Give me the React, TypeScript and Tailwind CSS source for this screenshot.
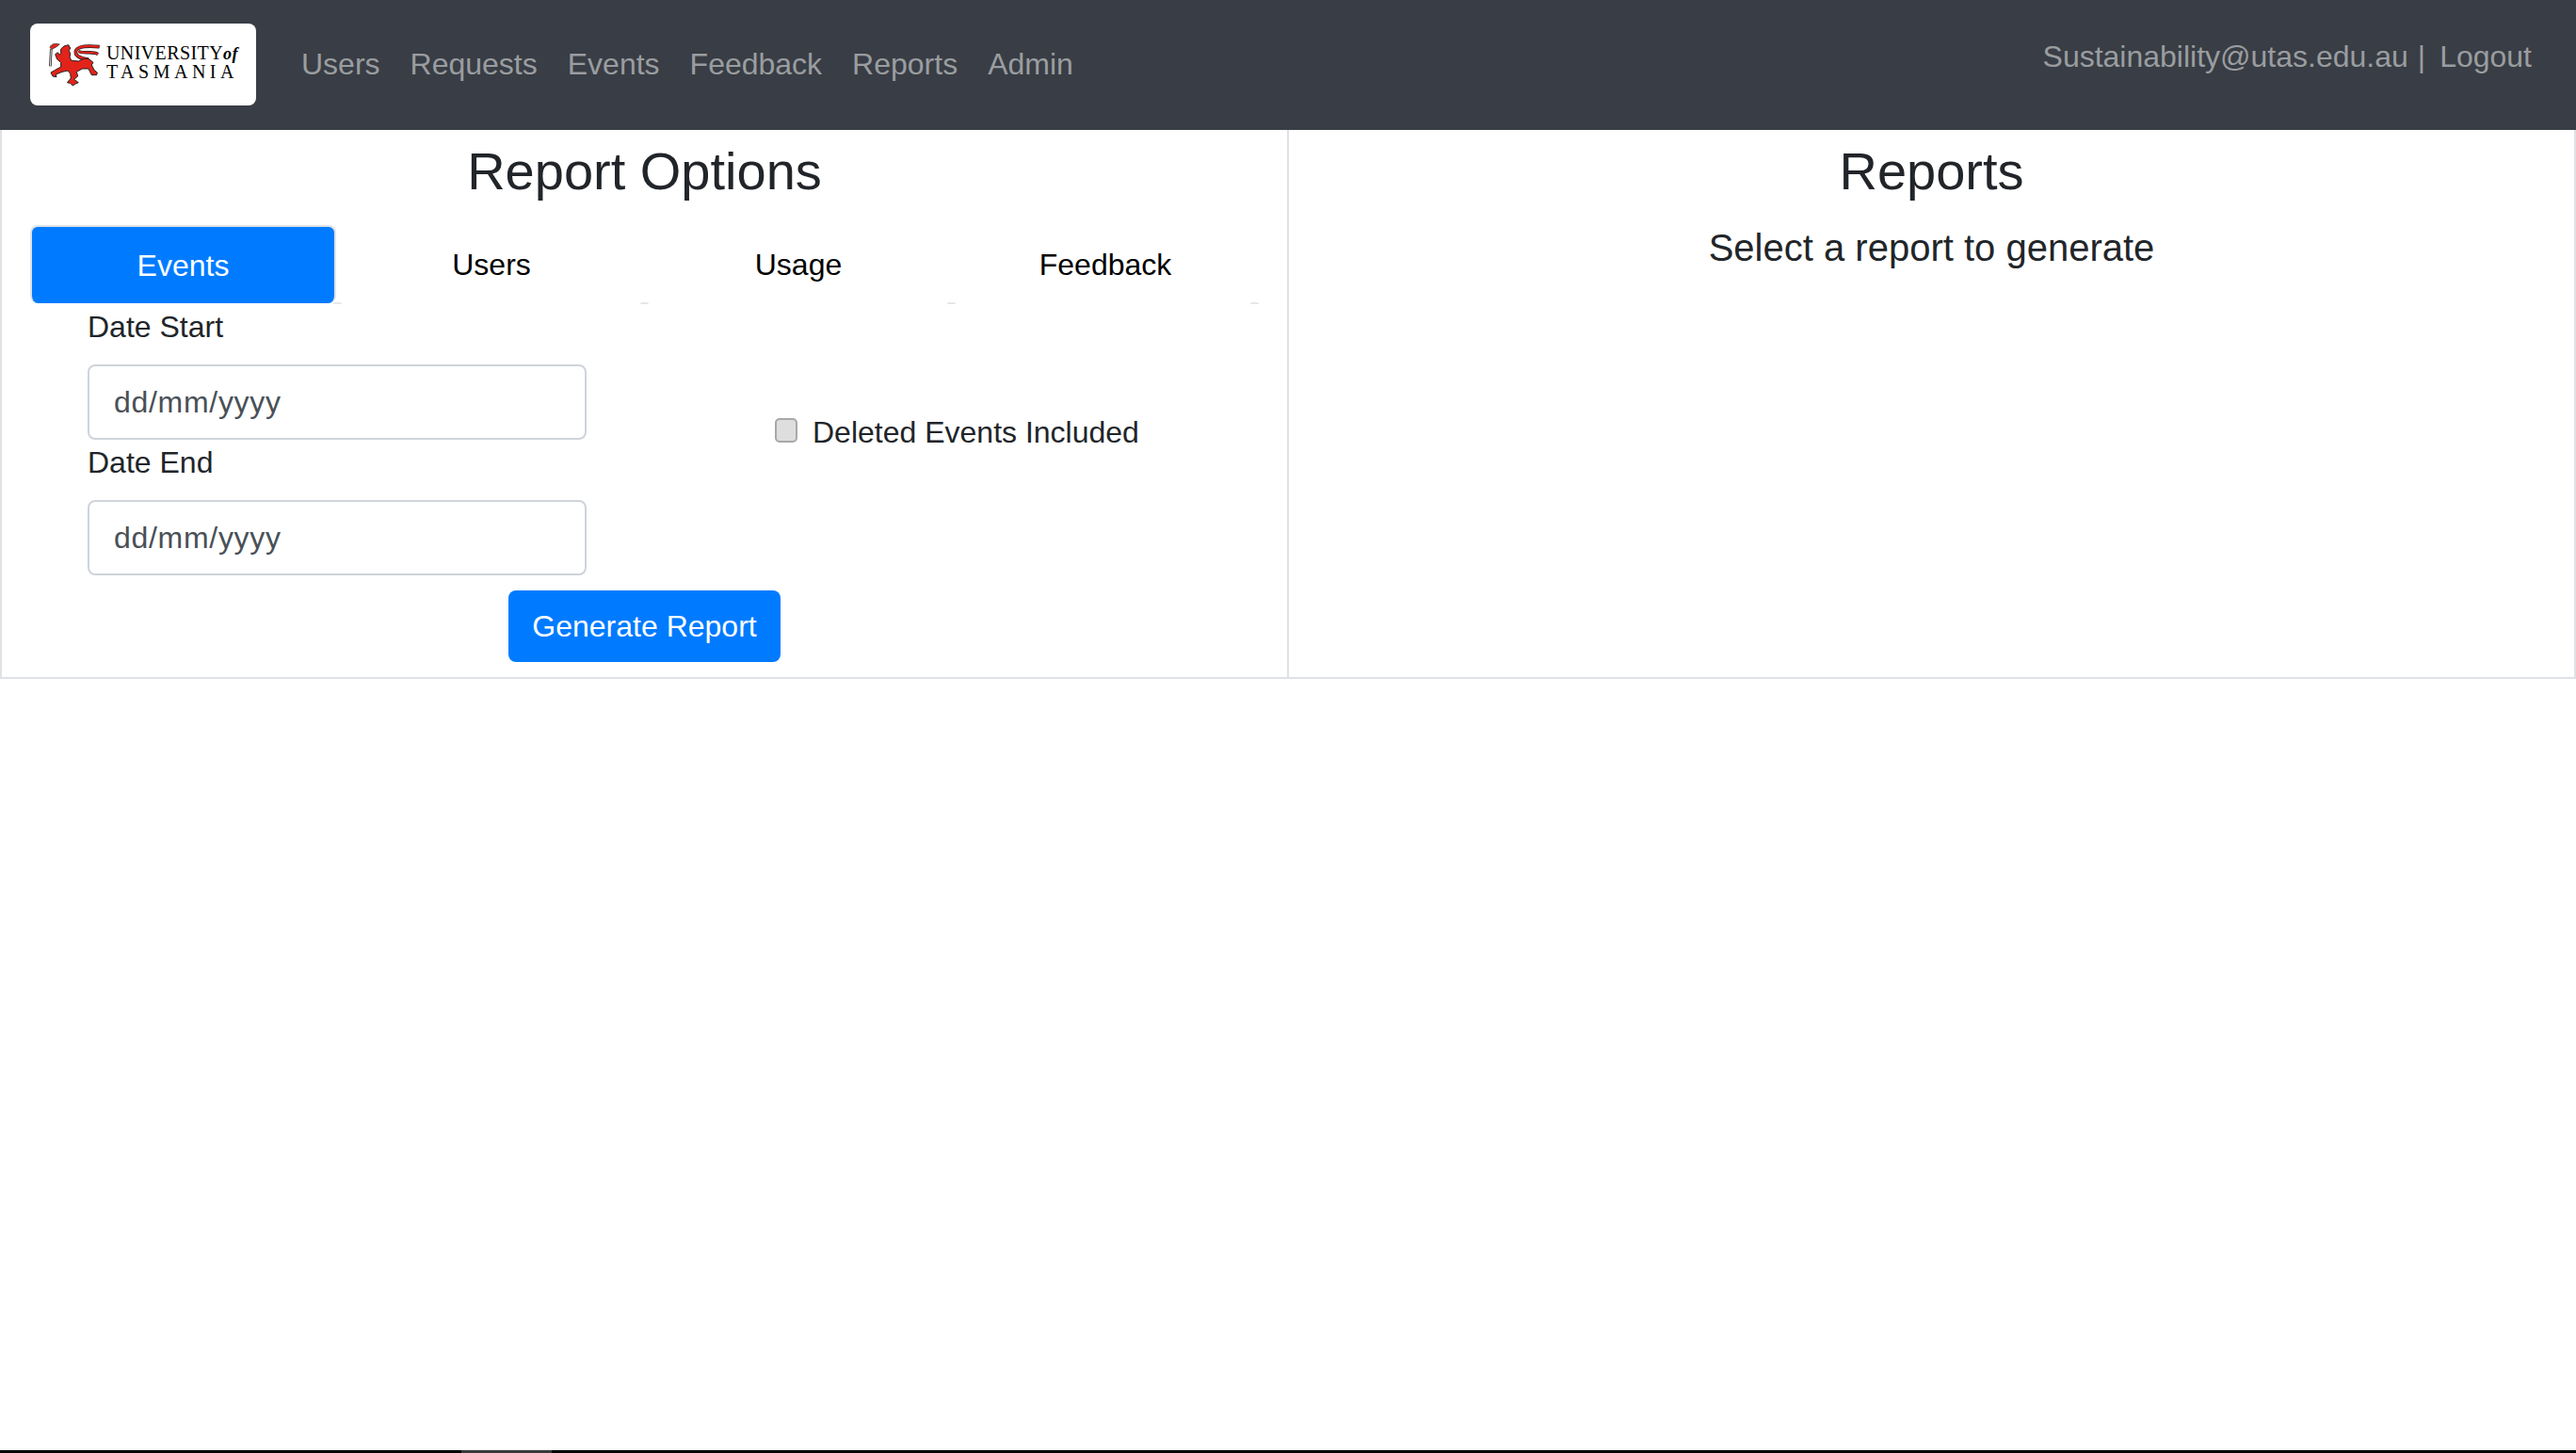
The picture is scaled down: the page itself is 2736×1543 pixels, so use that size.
function Lion() {
  const outline = "#222";
  return (
    <svg viewBox="21 24 168 144" className="w-[56px] h-[48px] shrink-0">
      <path d="M31 45 L28 100" fill="none" stroke="#333" strokeWidth="8" />
      <path d="M31 45 L28 100" fill="none" stroke="#d8d8d8" strokeWidth="3" />
      <path d="M27 40 C30 28 45 26 58 30 C50 38 40 43 32 46 Z" fill="#e2231a" stroke={outline} strokeWidth="2" />
      <path d="M150 78 C125 76 104 66 110 50 C116 36 150 34 185 38" fill="none" stroke={outline} strokeWidth="11" />
      <path d="M118 52 C135 62 165 50 180 62" fill="none" stroke={outline} strokeWidth="10" />
      <path d="M150 78 C125 76 104 66 110 50 C116 36 150 34 185 38" fill="none" stroke="#e2231a" strokeWidth="7" />
      <path d="M118 52 C135 62 165 50 180 62" fill="none" stroke="#e2231a" strokeWidth="6" />
      <path
        d="M62 45 L72 36 L86 32 L92 42 L88 50 L92 60 L90 72 L96 82 L118 84 L134 76 L150 76 L165 88 L160 96 L168 112 L178 120 L176 128 L160 128 L150 108 L130 108 L112 118 L116 132 L104 142 L118 152 L108 156 L100 162 L92 154 L82 152 L94 138 L92 124 L84 114 L66 118 L46 126 L48 134 L36 132 L30 120 L44 112 L62 102 L62 88 L50 78 L44 62 L52 56 L58 64 L62 58 Z"
        fill="#e2231a"
        stroke={outline}
        strokeWidth="3"
      />
    </svg>
  );
}

function Mark({ className }: { className: string }) {
  return <span className={`absolute bottom-[-1px] h-[2px] w-[9px] bg-[#e4e7ea] rounded-t-full ${className}`}></span>;
}

export default function App() {
  const tabBase = "relative h-[83px] flex items-center justify-center text-[32px] rounded-[8px]";
  return (
    <div className="w-full h-[1543px] bg-white flex flex-col font-['Liberation_Sans',sans-serif] text-[#212529]">
      <nav className="h-[138px] shrink-0 bg-[#393d45] flex items-start justify-between pl-[32px] pr-[47px]">
        <div className="flex items-center pt-[25px]">
          <div className="w-[240px] h-[87px] bg-white rounded-[8px] flex items-center gap-[6px] pl-[19px]">
            <Lion />
            <div className="flex flex-col mt-[-4px] text-black font-['Liberation_Serif',serif] leading-[19px]">
              <span className="text-[20px] tracking-[0.4px] whitespace-nowrap">UNIVERSITY<i className="text-[18px] font-bold">of</i></span>
              <span className="text-[20px] tracking-[4.5px] whitespace-nowrap">TASMANIA</span>
            </div>
          </div>
          <div className="flex items-center gap-[32px] ml-[48px] mt-[-2px] text-[32px] text-[#9a9da0]">
            <span>Users</span>
            <span>Requests</span>
            <span>Events</span>
            <span>Feedback</span>
            <span>Reports</span>
            <span>Admin</span>
          </div>
        </div>
        <div className="pt-[41px] flex text-[32px] leading-[38px] text-[#9a9da0]">
          <span>Sustainability@utas.edu.au</span>
          <span className="ml-[10px]">|</span>
          <span className="ml-[15px]">Logout</span>
        </div>
      </nav>
      <div className="flex h-[583px] shrink-0">
        <section className="flex-1 border-2 border-t-0 border-[#dee2e6] flex flex-col items-center pt-[10px]">
          <h3 className="text-[56px] leading-[67px] font-normal">Report Options</h3>
          <div className="self-stretch flex mt-[24px] pl-[30px] pr-[30px]">
            <div className={`${tabBase} w-[325px] shrink-0 bg-[#007bff] text-white border-2 border-b-0 border-[#dee2e6]`}>
              Events
              <Mark className="right-[-8px]" />
            </div>
            <div className={`${tabBase} flex-1 ml-[2px] text-black`}>
              Users
              <Mark className="right-[-4px]" />
            </div>
            <div className={`${tabBase} flex-1 text-black`}>
              Usage
              <Mark className="right-[-4px]" />
            </div>
            <div className={`${tabBase} flex-1 text-black`}>
              Feedback
              <Mark className="right-[0px]" />
            </div>
          </div>
          <div className="self-stretch flex pl-[91px] pt-[2px]">
            <div className="w-[530px] flex flex-col">
              <label className="text-[32px] leading-[48px] mt-[-1px] mb-[16px]">Date Start</label>
              <div className="h-[80px] border-2 border-[#ced4da] rounded-[8px] flex items-center px-[26px] text-[32px] tracking-[0.7px] text-[#495057]">dd/mm/yyyy</div>
              <label className="text-[32px] leading-[48px] mb-[16px]">Date End</label>
              <div className="h-[80px] border-2 border-[#ced4da] rounded-[8px] flex items-center px-[26px] text-[32px] tracking-[0.7px] text-[#495057]">dd/mm/yyyy</div>
            </div>
            <div className="flex items-center h-[48px] ml-[200px] mt-[111px]">
              <div className="w-[24px] h-[26px] mt-[-4px] rounded-[5px] bg-[#dedede] border-2 border-[#a8a8a8]"></div>
              <span className="ml-[16px] text-[32px] leading-[48px] whitespace-nowrap">Deleted Events Included</span>
            </div>
          </div>
          <button className="mt-[16px] h-[76px] w-[289px] rounded-[8px] bg-[#007bff] text-white text-[32px]">Generate Report</button>
        </section>
        <section className="flex-1 border-2 border-t-0 border-l-0 border-[#dee2e6] flex flex-col items-center pt-[10px]">
          <h3 className="text-[56px] leading-[67px] font-normal">Reports</h3>
          <h5 className="text-[40px] leading-[48px] font-normal mt-[24px]">Select a report to generate</h5>
        </section>
      </div>
      <div className="flex-1"></div>
      <div className="h-[3px] bg-black flex shrink-0">
        <div className="ml-[490px] w-[96px] bg-[#3a3a3a]"></div>
      </div>
    </div>
  );
}
